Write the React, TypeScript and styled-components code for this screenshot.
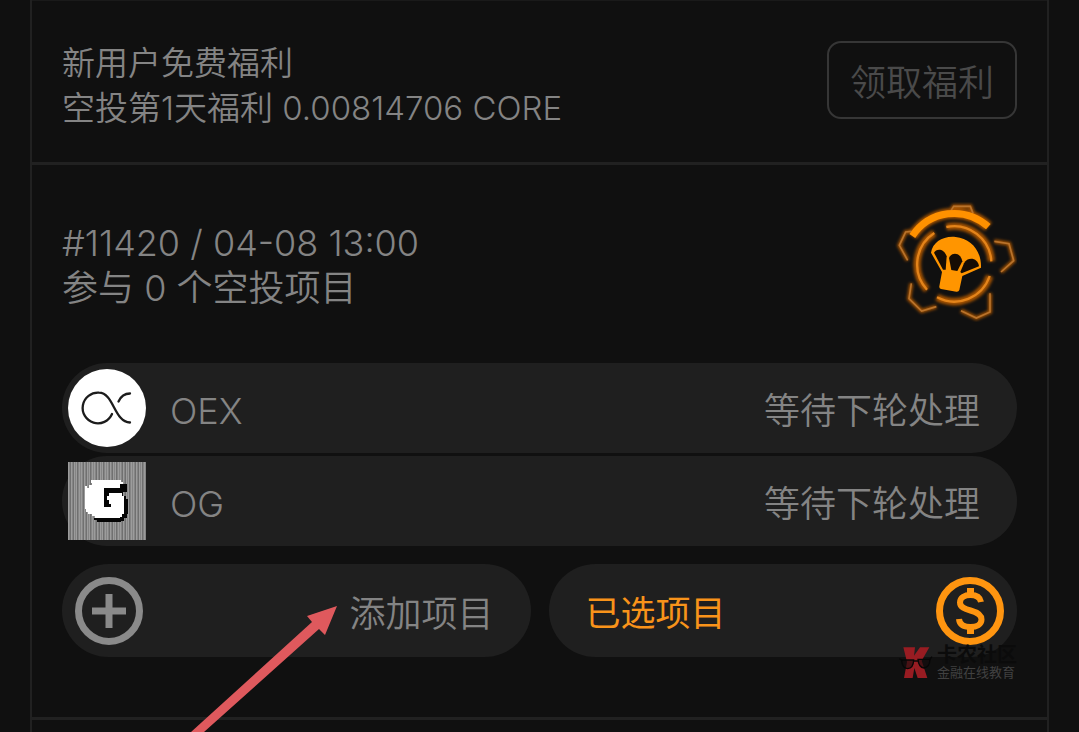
import React from "react";
import styled, { createGlobalStyle } from "styled-components";

const GlobalStyle = createGlobalStyle`
  * { box-sizing: border-box; }
  body {
    margin: 0;
    background: #101010;
    color: #848484;
    font-family: Inter, "Noto Sans CJK SC", sans-serif;
    font-weight: 350;
    overflow-x: hidden;
  }
`;

const Page = styled.main`
  padding: 0 30px;
`;

const Card = styled.div`
  border: solid #212121;
  border-width: 0 2px;
`;

const WelfareSection = styled.section`
  display: flex;
  align-items: flex-start;
  justify-content: space-between;
  padding: 40px 30px 31px;
  border-top: 1px solid #1a1a1a;
`;

const RoundSection = styled.section`
  padding: 37px 30px 60px;
  border: solid #212121;
  border-width: 3px 0;
`;

const NextSection = styled.div`
  height: 12px;
`;

const TextBlock = styled.div<{ $size: number }>`
  font-size: ${(p) => p.$size}px;
  line-height: 45px;
  p, h2 { margin: 0; font-size: inherit; font-weight: inherit; }
`;

const ClaimButton = styled.button`
  height: 78px;
  padding: 0 21px;
  border: 2px solid #363636;
  border-radius: 14px;
  background: transparent;
  color: #4a4a4a;
  font: inherit;
  font-size: 36px;
`;

const RoundHeader = styled.header`
  display: flex;
  align-items: center;
  justify-content: space-between;
  margin-bottom: 41px;

  ${TextBlock} { padding-top: 8px; }
`;

const ProjectList = styled.ul`
  display: flex;
  flex-direction: column;
  gap: 3px;
  margin: 0 0 18px;
  padding: 0;
  list-style: none;
`;

const ProjectRow = styled.li`
  display: flex;
  align-items: center;
  gap: 24px;
  height: 90px;
  padding: 0 37px 0 6px;
  border-radius: 45px;
  background: #1f1f1f;
  font-size: 36px;
`;

const ProjectInfo = styled.div`
  display: flex;
  flex: 1;
  align-items: baseline;
  justify-content: space-between;
`;

const Actions = styled.div`
  position: relative;
  display: grid;
  grid-template-columns: 1fr 1fr;
  gap: 18px;
`;

const ActionButton = styled.button<{ $active?: boolean }>`
  display: flex;
  align-items: center;
  justify-content: space-between;
  height: 93px;
  padding: ${(p) => (p.$active ? "0 13px 0 37px" : "0 37px 0 13px")};
  border: 0;
  border-radius: 47px;
  background: #1f1f1f;
  color: ${(p) => (p.$active ? "#f8931a" : "#848484")};
  font: inherit;
  font-size: ${(p) => (p.$active ? 35 : 36)}px;
  font-weight: ${(p) => (p.$active ? 400 : 350)};
`;

const Pointer = styled.svg`
  position: absolute;
  left: 128px;
  top: 40px;
  pointer-events: none;
`;

const Watermark = styled.div`
  position: absolute;
  right: 0;
  top: 81px;
  display: flex;
  gap: 4px;
  pointer-events: none;
`;

const WatermarkText = styled.div`
  display: flex;
  flex-direction: column;
  font-family: "Liberation Sans", "Noto Sans CJK SC", sans-serif;
  font-weight: 700;
`;

const WatermarkName = styled.span`
  color: #0b0b0b;
  font-size: 20px;
  line-height: 20px;
`;

const WatermarkTagline = styled.span`
  color: #414141;
  font-size: 13px;
  line-height: 15px;
  font-weight: 400;
`;

const emblemOutline = (
  <>
    <path d="M205 70L218 49H268L276 70" />
    <path d="M92 124L74 126L55 166L80 211" />
    <path d="M340 154L384 161L398 212L360 246" />
    <path d="M91 280L84 326L122 363L166 350" />
    <path d="M240 362L286 384L327 366V310" />
  </>
);

const emblemRing = (
  <>
    <path d="M196 111A112 112 0 0 1 331 214" />
    <path d="M326 258A112 112 0 0 1 168 322" />
    <path d="M138 299A112 112 0 0 1 160 129" />
  </>
);

function AirdropEmblem() {
  return (
    <svg width="122" height="120" viewBox="42 36 366 360" fill="none" aria-hidden="true">
      <defs>
        <filter id="glow" x="-20%" y="-20%" width="140%" height="140%">
          <feGaussianBlur stdDeviation="4" />
        </filter>
      </defs>
      <g stroke="#a65200" strokeWidth="12" filter="url(#glow)">
        {emblemOutline}
        <g strokeWidth="22">{emblemRing}</g>
        <path d="M94 138C146 61 250 47 322 110" strokeWidth="32" />
      </g>
      <g stroke="#b8732c" strokeWidth="5">{emblemOutline}</g>
      <g stroke="#e3841b" strokeWidth="7">{emblemRing}</g>
      <path d="M94 138C146 61 250 47 322 110" stroke="#ff9100" strokeWidth="21" />
      <path
        fill="#ff9500"
        d="M150 188C155 157 186 137 224 141C270 145 302 183 300 233L244 258L235 300Q233 306 226 305L180 297Q174 295 175 289L183 246Z"
      />
      <g fill="#160c04">
        <path d="M159 188C166 175 189 175 197 199L194 239L186 239Z" />
        <path d="M204 204C213 183 240 188 244 214L229 243L211 240Z" />
        <path d="M249 220C260 199 291 203 294 229L242 250L238 246Z" />
      </g>
    </svg>
  );
}

function OexIcon() {
  return (
    <svg width="78" height="78" viewBox="0 0 78 78" fill="none" aria-hidden="true">
      <circle cx="39" cy="39" r="39" fill="#fff" />
      <g stroke="#1c1c1c" strokeWidth="2.300" strokeLinecap="round">
        <path d="M44 45A15.300 15.300 0 1 1 31 23.700C46 24 46 53 62 53.500" />
        <path d="M50.500 32.500C53 27 57 24.500 62 24.500" />
      </g>
    </svg>
  );
}

function OgIcon() {
  return (
    <svg width="78" height="78" viewBox="0 0 78 78" shapeRendering="crispEdges" aria-hidden="true">
      <defs>
        <pattern id="stripes" width="13" height="78" patternUnits="userSpaceOnUse">
          <rect width="13" height="78" fill="#858585" />
          <path stroke="#9c9c9c" d="M0.500 0V78M3.500 0V78M6.500 0V78M8.500 0V78M11.500 0V78" />
          <path stroke="#707070" d="M2.500 0V78M5.500 0V78M9.500 0V78" />
        </pattern>
      </defs>
      <rect width="78" height="78" fill="url(#stripes)" />
      <path fill="#050505" d="M52 22H59V30H55V34H58V37H60V52H59V56H56V59H53V60H29V58H26V56H50V46H36V26H52Z" />
      <path
        fill="#fff"
        d="M23 18H53V20H55V22H52V26H36V45H43V42H41V38H39V34H41V31H54V34H56V52H54V55H52V56H27V54H24V52H20V50H18V47H17V24H19V26H21V23H24V21H23Z"
      />
    </svg>
  );
}

function PlusIcon() {
  return (
    <svg width="68" height="68" viewBox="0 0 68 68" fill="none" stroke="#8a8a8a" strokeWidth="7" aria-hidden="true">
      <circle cx="34" cy="34" r="30.500" />
      <path d="M34 17V51M17 34H51" />
    </svg>
  );
}

function DollarIcon() {
  return (
    <svg width="68" height="68" viewBox="0 0 68 68" fill="none" stroke="#ff9510" strokeWidth="7" aria-hidden="true">
      <circle cx="34" cy="34" r="30.500" />
      <path strokeWidth="6" d="M45 25C44 20 40 18 34.500 18C28.500 18 24 20.500 24 25.500C24 30.500 29 32 34.500 33.500C40 35 45.500 37 45.500 42.500C45.500 47.500 40.500 50 34.500 50C28 50 23.500 47.500 23 42" />
      <path strokeWidth="7" d="M34.500 11V19M34.500 49V57" />
    </svg>
  );
}

function WatermarkLogo() {
  return (
    <svg width="34" height="35" viewBox="30 255 102 105" aria-hidden="true">
      <path fill="#981c22" d="M43 262H78L75 287L93 262H121L98 302L115 354H86L76 324L71 354H45L54 306Z" />
      <g fill="#150c0d" fillOpacity="0.600" stroke="#070707" strokeWidth="4">
        <path d="M38 300H74Q73 325 56 326Q39 325 38 300Z" />
        <path d="M87 298H123Q122 322 105 324Q89 322 87 298Z" />
        <path d="M31 296L40 302M74 303H88M121 300L129 290" />
      </g>
    </svg>
  );
}

const projects = [
  { name: "OEX", icon: <OexIcon /> },
  { name: "OG", icon: <OgIcon /> },
];

export default function App() {
  return (
    <>
      <GlobalStyle />
      <Page>
        <Card>
          <WelfareSection>
            <TextBlock $size={33}>
              <h2>新用户免费福利</h2>
              <p>空投第1天福利 0.00814706 CORE</p>
            </TextBlock>
            <ClaimButton type="button">领取福利</ClaimButton>
          </WelfareSection>
          <RoundSection>
            <RoundHeader>
              <TextBlock $size={36}>
                <h2>#11420 / 04-08 13:00</h2>
                <p>参与 0 个空投项目</p>
              </TextBlock>
              <AirdropEmblem />
            </RoundHeader>
            <ProjectList>
              {projects.map((project) => (
                <ProjectRow key={project.name}>
                  {project.icon}
                  <ProjectInfo>
                    <span>{project.name}</span>
                    <span>等待下轮处理</span>
                  </ProjectInfo>
                </ProjectRow>
              ))}
            </ProjectList>
            <Actions>
              <ActionButton type="button">
                <PlusIcon />
                添加项目
              </ActionButton>
              <ActionButton type="button" $active>
                已选项目
                <DollarIcon />
              </ActionButton>
              <Pointer width="150" height="128" viewBox="0 0 150 128" aria-hidden="true">
                <path fill="#df595d" d="M147 2L117 12L122 18L1 128H14L129 25L135 31Z" />
              </Pointer>
              <Watermark>
                <WatermarkLogo />
                <WatermarkText>
                  <WatermarkName>卡农社区</WatermarkName>
                  <WatermarkTagline>金融在线教育</WatermarkTagline>
                </WatermarkText>
              </Watermark>
            </Actions>
          </RoundSection>
          <NextSection />
        </Card>
      </Page>
    </>
  );
}
